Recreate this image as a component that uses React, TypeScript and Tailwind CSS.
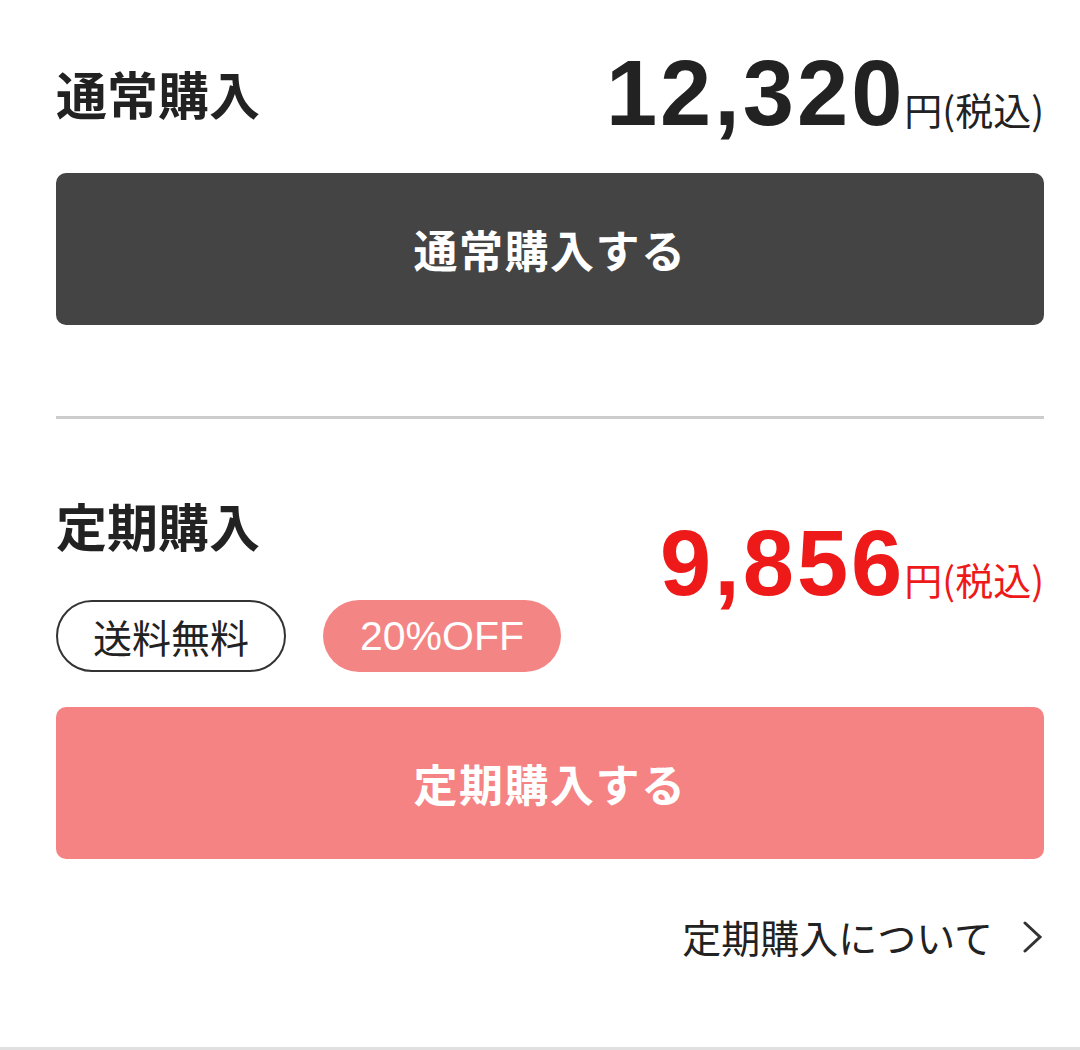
import React from "react";

const jp = { fontFamily: '"Noto Sans CJK JP", "Noto Sans", sans-serif' } as React.CSSProperties;
const num = { fontFamily: '"Liberation Sans", Arial, sans-serif' } as React.CSSProperties;

function Price({ value, color }: { value: string; color: string }) {
  return (
    <div className={`flex items-baseline ${color}`}>
      <span style={num} className="text-[92px] leading-none font-bold tracking-[3px]">
        {value}
      </span>
      <span style={jp} className="text-[38px] leading-none ml-[-1px]">
        円(税込)
      </span>
    </div>
  );
}

export default function App() {
  return (
    <div style={jp} className="w-[1080px] h-[1050px] bg-white text-[#222] flex flex-col overflow-hidden">
      <div className="pl-[56px] pr-[36px] pt-[46px] flex flex-col flex-1">
        <div className="flex items-center justify-between h-[94px]">
          <h2 className="text-[51px] font-bold leading-none">通常購入</h2>
          <Price value="12,320" color="text-[#222]" />
        </div>
        <button className="mt-[33px] h-[152px] w-full rounded-[10px] bg-[#444444] text-white text-[44px] font-bold tracking-[1.5px]">
          通常購入する
        </button>
        <div className="mt-[91px] h-[3px] bg-[#cccccc]" />
        <div className="mt-[81px] flex items-start justify-between">
          <div className="flex flex-col">
            <h2 className="text-[51px] font-bold leading-none">定期購入</h2>
            <div className="mt-[49px] flex gap-[37px]">
              <span className="h-[72px] w-[230px] rounded-full border-2 border-[#333] flex items-center justify-center text-[39px] leading-none">
                送料無料
              </span>
              <span
                style={num}
                className="h-[72px] w-[238px] rounded-full bg-[#f48585] text-white flex items-center justify-center text-[41px] leading-none"
              >
                20%OFF
              </span>
            </div>
          </div>
          <div className="mt-[17px]">
            <Price value="9,856" color="text-[#ee1a1a]" />
          </div>
        </div>
        <button className="mt-[35px] h-[152px] w-full rounded-[10px] bg-[#f58383] text-white text-[44px] font-bold tracking-[1.5px]">
          定期購入する
        </button>
        <div className="mt-[58px] flex items-center justify-end gap-[30px]">
          <span className="text-[39px] leading-none">定期購入について</span>
          <svg width="20" height="32" viewBox="0 0 20 32" fill="none" className="mr-[1px]">
            <path d="M2 2 L17 16 L2 30" stroke="#333" strokeWidth="3" strokeLinecap="round" strokeLinejoin="miter" />
          </svg>
        </div>
      </div>
      <div className="h-[3px] bg-[#e0e0e0]" />
    </div>
  );
}
